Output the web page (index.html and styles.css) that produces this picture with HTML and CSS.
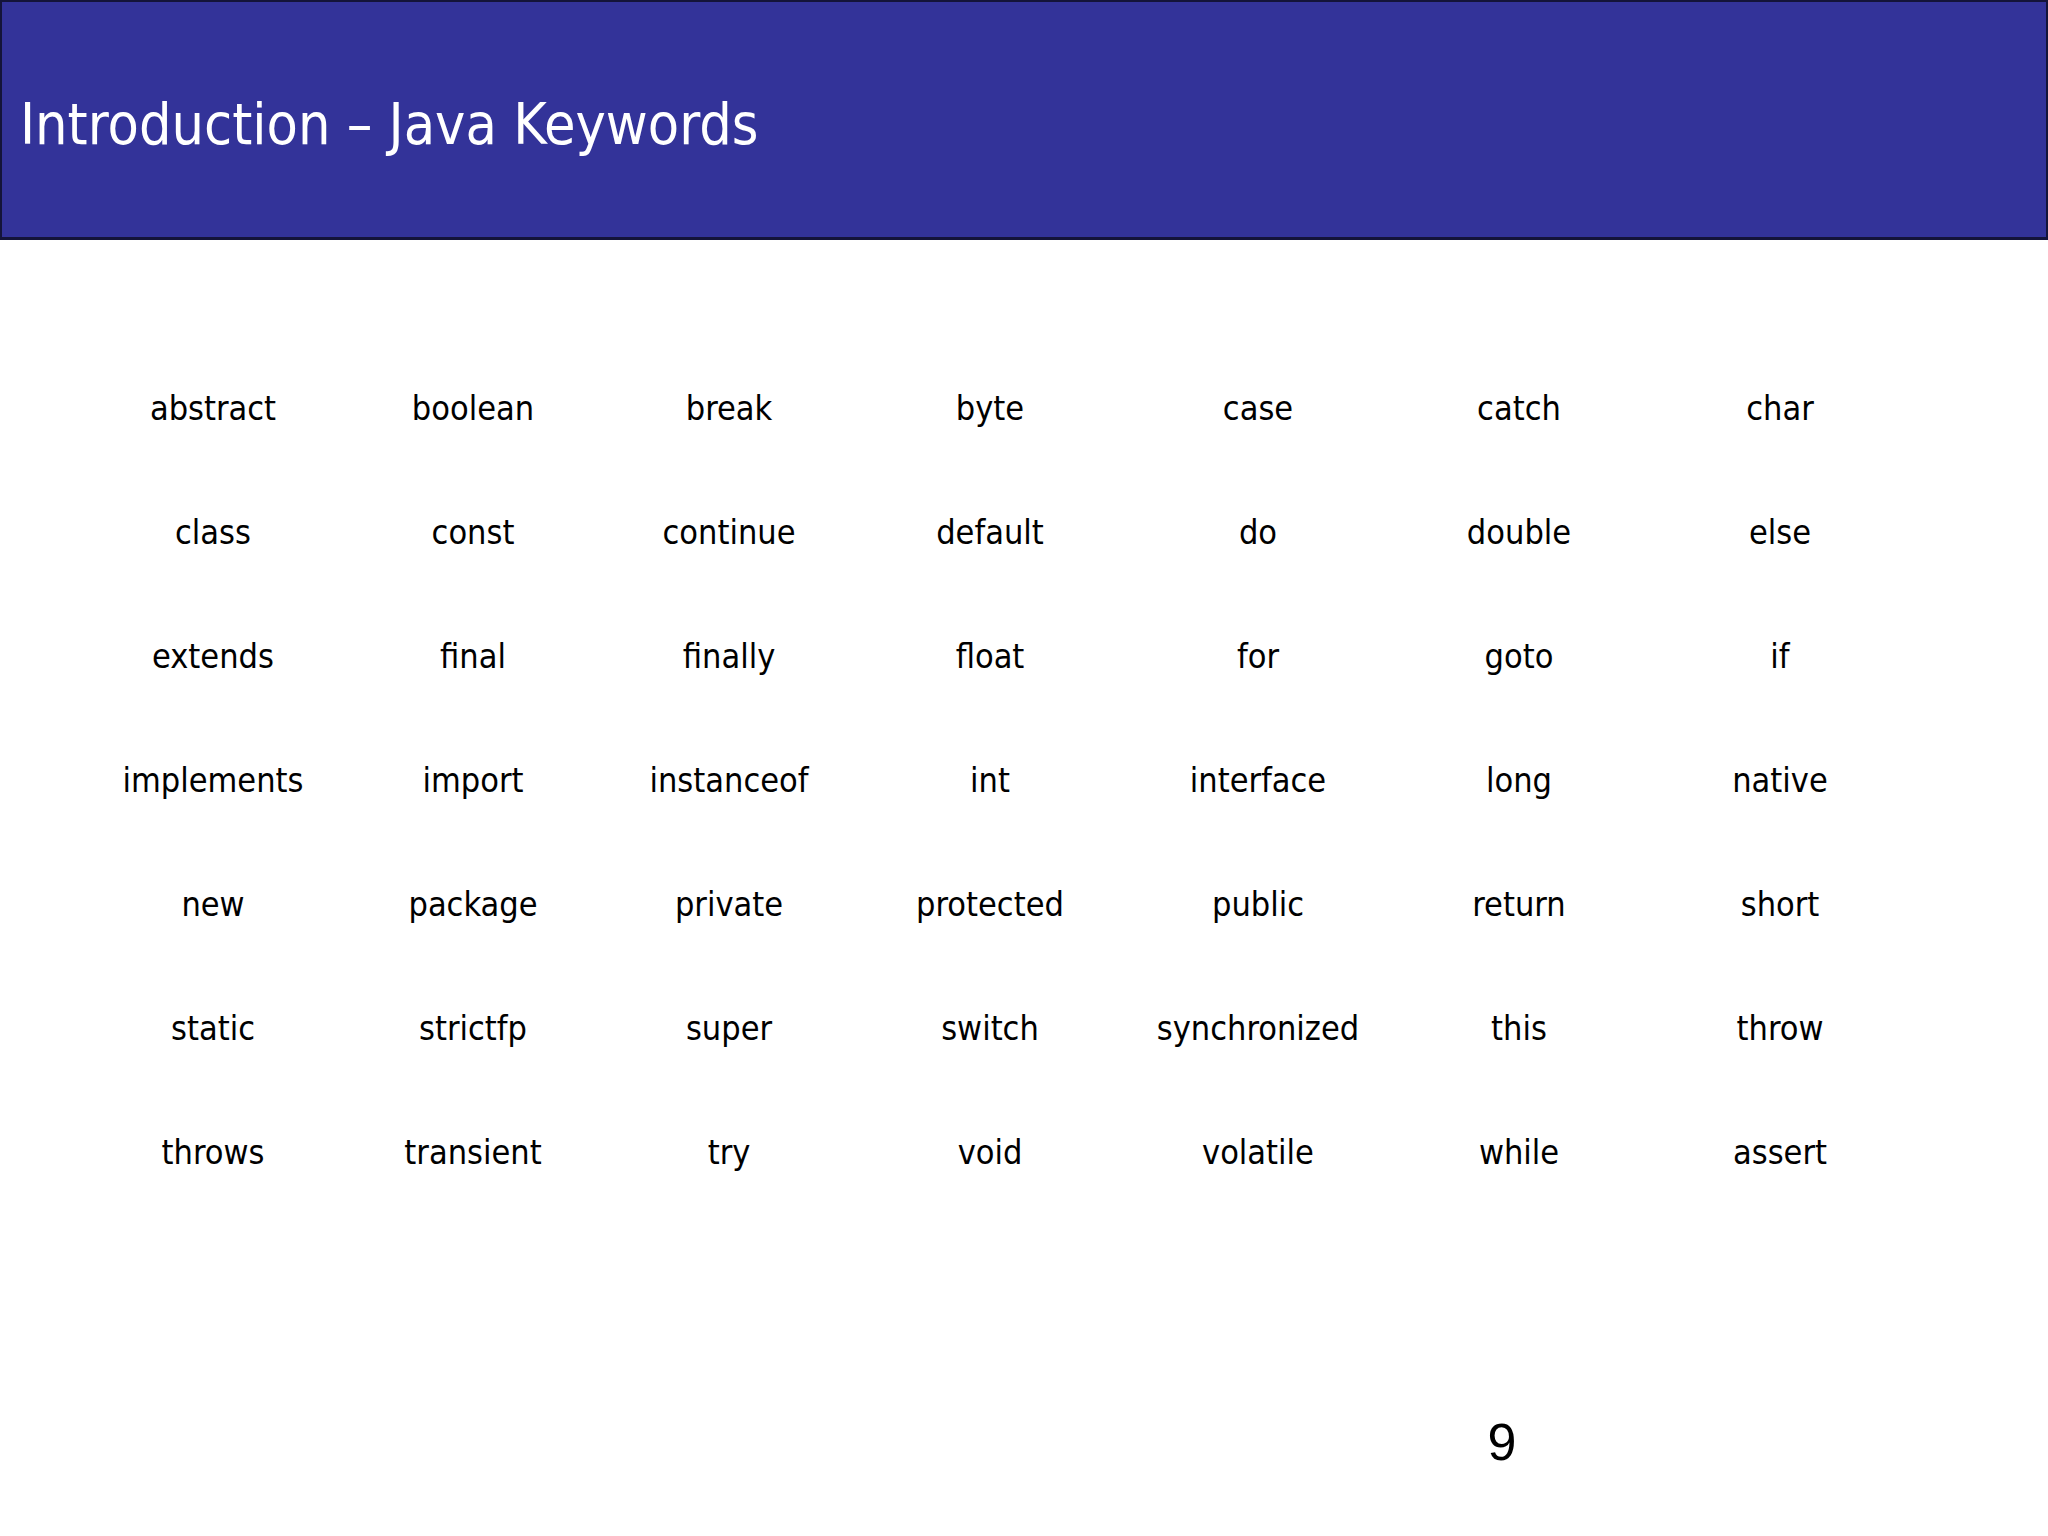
FILE: index.html
```
<!DOCTYPE html>
<html>
<head>
<meta charset="utf-8">
<link rel="stylesheet" href="styles.css">
</head>
<body>
<div class="slide">
  <header class="banner">
    <h1 class="title">Introduction – Java Keywords</h1>
  </header>
  <main class="grid">
    <span>abstract</span><span>boolean</span><span>break</span><span>byte</span><span>case</span><span>catch</span><span>char</span>
    <span>class</span><span>const</span><span>continue</span><span>default</span><span>do</span><span>double</span><span>else</span>
    <span>extends</span><span>final</span><span>finally</span><span>float</span><span>for</span><span>goto</span><span>if</span>
    <span>implements</span><span>import</span><span>instanceof</span><span>int</span><span>interface</span><span>long</span><span>native</span>
    <span>new</span><span>package</span><span>private</span><span>protected</span><span>public</span><span>return</span><span>short</span>
    <span>static</span><span>strictfp</span><span>super</span><span>switch</span><span>synchronized</span><span>this</span><span>throw</span>
    <span>throws</span><span>transient</span><span>try</span><span>void</span><span>volatile</span><span>while</span><span>assert</span>
  </main>
  <footer class="footer">
    <span class="page">9</span>
  </footer>
</div>
</body>
</html>
```
FILE: styles.css
```
html, body {
  margin: 0;
  padding: 0;
  background: #ffffff;
}
.slide {
  width: 2048px;
  height: 1536px;
  display: flex;
  flex-direction: column;
  font-family: "DejaVu Sans Condensed", "DejaVu Sans", sans-serif;
}
.banner {
  box-sizing: border-box;
  height: 240px;
  background: #333399;
  border: 2px solid #14143a;
  border-bottom-width: 3px;
  display: flex;
  align-items: center;
  padding-left: 18px;
}
.title {
  margin: 0;
  color: #ffffff;
  font-weight: normal;
  font-size: 57px;
  line-height: 1;
  padding-top: 10px;
}
.grid {
  display: grid;
  grid-template-columns: 260px 260px 252px 270px 266px 256px 266px;
  grid-auto-rows: 124px;
  padding-left: 83px;
  padding-top: 106px;
  font-size: 34px;
  color: #000;
  line-height: 124px;
}
.grid span {
  text-align: center;
}
.footer {
  display: flex;
  padding-left: 1474px;
  padding-top: 198px;
}
.page {
  font-family: "Liberation Sans", Arial, sans-serif;
  font-size: 52px;
  width: 56px;
  text-align: center;
}
```
